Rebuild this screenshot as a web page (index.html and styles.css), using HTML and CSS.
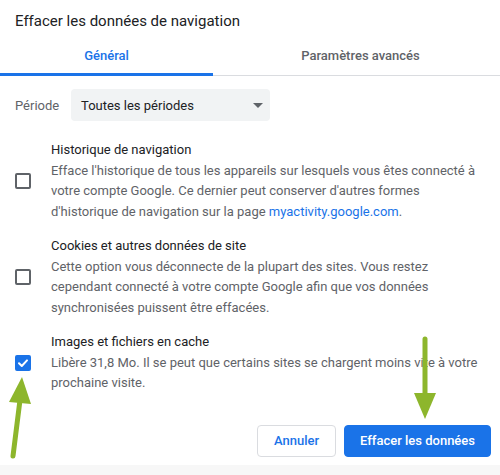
FILE: index.html
```html
<!DOCTYPE html>
<html lang="fr">
<head>
<meta charset="utf-8">
<title>Effacer les données de navigation</title>
<link rel="stylesheet" href="styles.css">
</head>
<body>
<div class="dialog">
  <h1 class="title">Effacer les données de navigation</h1>
  <div class="tabs">
    <div class="tab tab-active">Général</div>
    <div class="tab tab-other">Paramètres avancés</div>
  </div>
  <div class="period">
    <span class="period-label">Période</span>
    <div class="select">
      <span>Toutes les périodes</span>
      <span class="select-arrow"></span>
    </div>
  </div>
  <div class="options">
    <div class="option">
      <span class="checkbox"></span>
      <div class="option-text">
        <div class="option-title">Historique de navigation</div>
        <div class="option-desc">Efface l'historique de tous les appareils sur lesquels vous êtes connecté à<br>votre compte Google. Ce dernier peut conserver d'autres formes<br>d'historique de navigation sur la page <span class="link">myactivity.google.com</span>.</div>
      </div>
    </div>
    <div class="option">
      <span class="checkbox"></span>
      <div class="option-text">
        <div class="option-title">Cookies et autres données de site</div>
        <div class="option-desc">Cette option vous déconnecte de la plupart des sites. Vous restez<br>cependant connecté à votre compte Google afin que vos données<br>synchronisées puissent être effacées.</div>
      </div>
    </div>
    <div class="option">
      <span class="checkbox checkbox-checked">
        <svg width="12" height="12" viewBox="0 0 12 12"><path d="M2 6.2 L4.8 9 L10 3.4" fill="none" stroke="#fff" stroke-width="2" stroke-linecap="round" stroke-linejoin="round"/></svg>
      </span>
      <div class="option-text">
        <div class="option-title">Images et fichiers en cache</div>
        <div class="option-desc">Libère 31,8 Mo. Il se peut que certains sites se chargent moins vite à votre<br>prochaine visite.</div>
      </div>
    </div>
  </div>
  <div class="actions">
    <button class="btn btn-cancel">Annuler</button>
    <button class="btn btn-primary">Effacer les données</button>
  </div>
  <div class="footer"></div>
</div>
<svg class="arrows" width="500" height="475" viewBox="0 0 500 475">
  <line x1="13" y1="456" x2="20" y2="400" stroke="#8db62c" stroke-width="5" stroke-linecap="round"/>
  <polygon points="22,377 31,404 9,402" fill="#8db62c"/>
  <line x1="425" y1="339" x2="425" y2="396" stroke="#8db62c" stroke-width="5" stroke-linecap="round"/>
  <polygon points="414,393 436,393 425,419" fill="#8db62c"/>
</svg>
</body>
</html>
```
FILE: styles.css
```css
* { box-sizing: border-box; }
html, body {
  margin: 0;
  padding: 0;
  background: #fff;
}
body {
  font-family: Roboto, "Liberation Sans", sans-serif;
  color: #202124;
  width: 500px;
  height: 475px;
  overflow: hidden;
  position: relative;
}
.dialog {
  display: flex;
  flex-direction: column;
  height: 475px;
}
.title {
  margin: 0;
  padding: 11px 0 0 15px;
  font-size: 15px;
  line-height: 20px;
  font-weight: 400;
  color: #202124;
}
.tabs {
  margin-top: 5px;
  display: flex;
  border-bottom: 1px solid #dadce0;
}
.tab {
  height: 39px;
  line-height: 39px;
  font-size: 13px;
  font-weight: 500;
  text-align: center;
  position: relative;
}
.tab-active {
  width: 213px;
  color: #1a73e8;
}
.tab-active::after {
  content: "";
  position: absolute;
  left: 0;
  right: 0;
  bottom: -1px;
  height: 3px;
  background: #1a73e8;
}
.tab-other {
  flex: 1;
  padding-left: 8px;
  color: #5f6368;
}
.period {
  display: flex;
  align-items: center;
  margin-top: 13px;
  padding-left: 15px;
}
.period-label {
  font-size: 13px;
  color: #5f6368;
  width: 56px;
}
.select {
  width: 199px;
  height: 32px;
  background: #f1f3f4;
  border-radius: 4px;
  display: flex;
  align-items: center;
  justify-content: space-between;
  padding: 0 7px 0 10px;
  font-size: 13px;
  color: #202124;
}
.select-arrow {
  width: 0;
  height: 0;
  border-left: 5px solid transparent;
  border-right: 5px solid transparent;
  border-top: 5px solid #5f6368;
}
.options {
  margin-top: 19px;
  display: flex;
  flex-direction: column;
  gap: 14px;
}
.option {
  display: flex;
  align-items: center;
  padding-left: 15px;
}
.checkbox {
  flex: 0 0 16px;
  width: 16px;
  height: 16px;
  border: 2px solid #5f6368;
  border-radius: 2px;
  margin-right: 20px;
  display: flex;
  align-items: center;
  justify-content: center;
}
.checkbox-checked {
  background: #1a73e8;
  border-color: #1a73e8;
}
.option-text {
  font-size: 13px;
  line-height: 20.5px;
  white-space: nowrap;
}
.option-title {
  color: #202124;
}
.option-desc {
  color: #5f6368;
}
.link {
  color: #1a73e8;
}
.actions {
  margin-top: 31px;
  display: flex;
  justify-content: flex-end;
  gap: 8px;
  padding-right: 9px;
}
.btn {
  height: 32px;
  border-radius: 4px;
  font-family: Roboto, "Liberation Sans", sans-serif;
  font-size: 13px;
  font-weight: 500;
  cursor: pointer;
}
.btn-cancel {
  width: 79px;
  background: #fff;
  border: 1px solid #dadce0;
  color: #1a73e8;
}
.btn-primary {
  width: 147px;
  background: #1a73e8;
  border: 1px solid #1a73e8;
  color: #fff;
}
.footer {
  margin-top: auto;
  height: 10px;
  background: #f7f7f7;
}
.arrows {
  position: absolute;
  left: 0;
  top: 0;
  pointer-events: none;
}
```
